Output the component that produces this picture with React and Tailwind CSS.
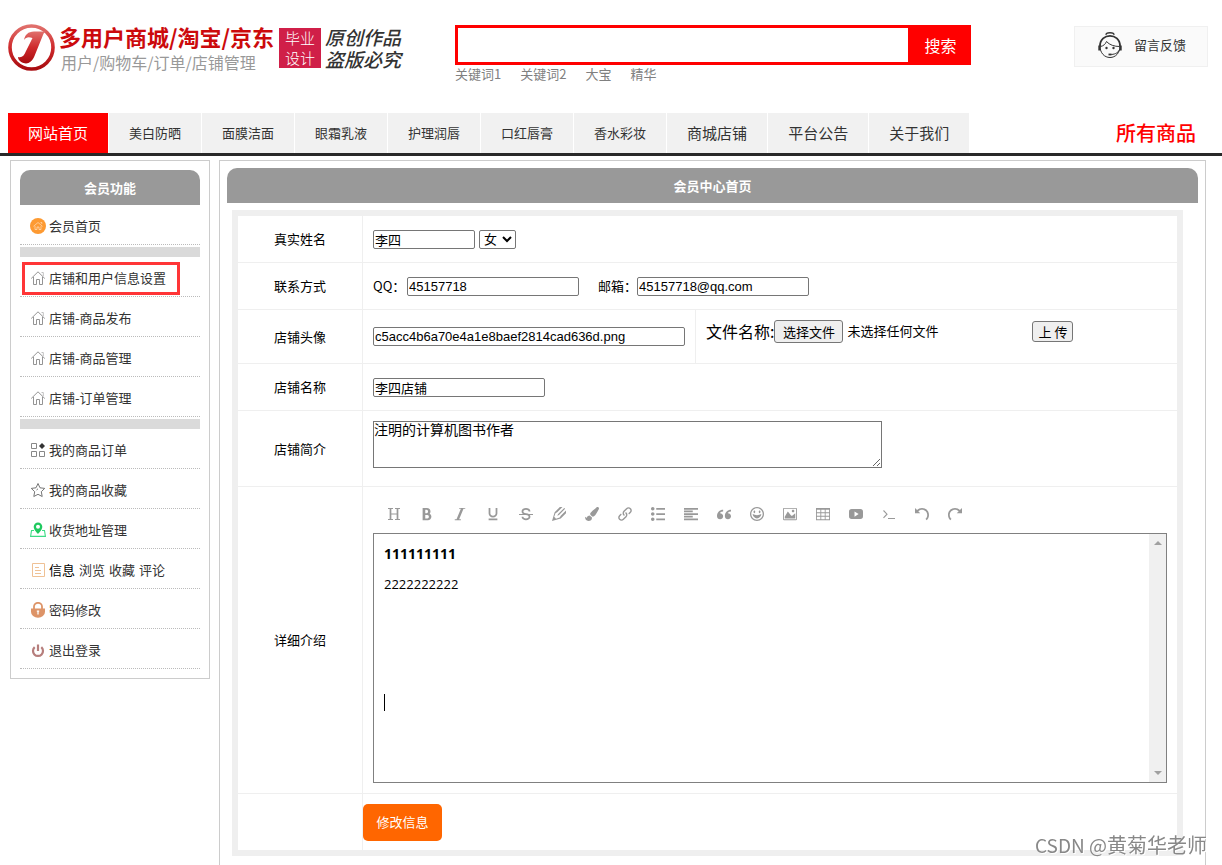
import React from "react";
import {
  ImBold,
  ImItalic,
  ImUnderline,
  ImStrikethrough,
  ImPencil2,
  ImLink,
  ImList2,
  ImParagraphLeft,
  ImQuotesLeft,
  ImHappy,
  ImImage,
  ImTable2,
  ImUndo,
  ImRedo,
} from "react-icons/im";
import { FaPaintBrush } from "react-icons/fa";

function LogoMark() {
  return (
    <svg width="48" height="48" viewBox="0 0 48 48" aria-hidden="true">
      <defs>
        <linearGradient id="ring" x1="0" y1="0" x2="0" y2="1">
          <stop offset="0" stopColor="#e0706c" />
          <stop offset="0.5" stopColor="#cf2a2c" />
          <stop offset="1" stopColor="#a80c10" />
        </linearGradient>
      </defs>
      <circle cx="23.5" cy="23.5" r="21.5" fill="#fff" stroke="url(#ring)" strokeWidth="3.6" />
      <path d="M16 16c1-5 4-8.500 10-8.500h12.500c-1.500 0-2.500 1-3.300 3L26.500 32c-2.500 6-6.500 8.500-11 7-4-1.300-5.500-4-5.500-6 4 1 6-1 8-6l6.500-13c-4-1.500-6.500-1-8.500 2z" fill="url(#ring)" />
    </svg>
  );
}

function AgentIcon() {
  return (
    <svg width="24" height="28" viewBox="0 0 24 28" fill="none" stroke="#333" strokeWidth="1" aria-hidden="true">
      <path d="M8 3.8C8 1 16 1 16 3.8" strokeWidth="1.6" />
      <path d="M2 15c0 7 4.500 11.500 10 11.500S22 22 22 15" />
      <path d="M2 15C2 1.500 22 1.500 22 15" strokeWidth="1.800" />
      <path d="M2.500 15.500c3-.5 5-2.500 6-5 3 3.500 8 5 13 5" />
      <path d="M1.500 14.500v5M22.500 14.500v5" strokeWidth="2.4" />
      <circle cx="8.500" cy="17" r="1.200" fill="#333" stroke="none" />
      <circle cx="15.500" cy="17" r="1.200" fill="#333" stroke="none" />
      <path d="M12 23.500c4 0 8-1 9.500-5" />
      <path d="M10.500 23.500h3" strokeWidth="1.800" />
    </svg>
  );
}

function HomeBadge() {
  return (
    <svg width="16" height="16" viewBox="0 0 16 16" fill="none" aria-hidden="true">
      <circle cx="8" cy="8" r="8" fill="#fd9a32" />
      <path d="M3.500 8.300L8 4.500l4.500 3.800M5 8v3.500h2V9h2v2.500h2V8M10.500 4.500h1.300v1.500" stroke="#fff" strokeOpacity="0.6" strokeWidth="0.800" />
    </svg>
  );
}

function HouseIcon() {
  return (
    <svg width="16" height="16" viewBox="0 0 16 16" fill="none" stroke="#888" strokeWidth="0.900" aria-hidden="true">
      <path d="M1.200 8.500L8 1.800l6.800 6.700M3.500 7v7.500h3V9.500h3v5h3V7" />
      <path d="M11.500 2.500h1.800v3.500" stroke="#bbb" />
    </svg>
  );
}

function OrdersIcon() {
  return (
    <svg width="16" height="16" viewBox="0 0 16 16" fill="none" stroke="#888" aria-hidden="true">
      <path d="M1.500 1.500h5v5h-5zM1.500 9.500h5v5h-5zM9.500 9.500h5v5h-5z" />
      <path d="M12 1l3 3-3 3-3-3z" fill="#333" stroke="none" />
    </svg>
  );
}

function StarIcon() {
  return (
    <svg width="16" height="16" viewBox="0 0 16 16" fill="none" stroke="#666" strokeWidth="0.900" aria-hidden="true">
      <path d="M8 1.500l2 4.300 4.700.6-3.400 3.300.9 4.800L8 12.300l-4.200 2.200.9-4.800L1.300 6.400 6 5.800z" strokeLinejoin="round" />
      <path d="M6.500 8l1.500-1.200" />
    </svg>
  );
}

function PinIcon() {
  return (
    <svg width="16" height="16" viewBox="0 0 16 16" fill="none" aria-hidden="true">
      <path d="M4 8.500H1.500L.6 14.400h14.800l-.9-5.900H12" stroke="#3ddc84" strokeWidth="1.100" />
      <path fillRule="evenodd" d="M8 .5a4.300 4.300 0 0 1 4.300 4.300C12.300 8 8 12 8 12S3.700 8 3.700 4.800A4.300 4.300 0 0 1 8 .5zM8 2.800a2 2 0 1 0 0 4 2 2 0 0 0 0-4z" fill="#1fc95f" />
    </svg>
  );
}

function NoteIcon() {
  return (
    <svg width="16" height="16" viewBox="0 0 16 16" fill="none" stroke="#efc195" aria-hidden="true">
      <path d="M2.500 1.500h12v13h-12z" />
      <path d="M5 5.500h4M5 8.500h6M5 11.500h6" />
    </svg>
  );
}

function LockIcon() {
  return (
    <svg width="16" height="16" viewBox="0 0 16 16" fill="none" aria-hidden="true">
      <path d="M4 7V4.500a4 3.700 0 0 1 8 0V7" stroke="#dd9468" strokeWidth="1.800" />
      <path d="M1 6.500h14v3.200a7 6 0 0 1-14 0z" fill="#dd9468" />
      <path d="M8 8.500v4M6.800 9.200h2.400" stroke="#fff" strokeWidth="1.300" />
    </svg>
  );
}

function PowerIcon() {
  return (
    <svg width="16" height="16" viewBox="0 0 16 16" fill="none" stroke="#b67e7c" strokeWidth="2.200" aria-hidden="true">
      <path d="M4.700 5.200a5 5 0 1 0 6.600 0M8 2.500v6.500" />
    </svg>
  );
}

function HeadingIcon() {
  return (
    <svg width="14" height="14" viewBox="0 0 14 14" fill="none" stroke="currentColor" aria-hidden="true">
      <path d="M3.500 1.500v11M10.500 1.500v11" strokeWidth="1.700" />
      <path d="M3.500 7h7M1 1.500h5M8 1.500h5M1 12.500h5M8 12.500h5" strokeWidth="1" />
    </svg>
  );
}

function VideoIcon() {
  return (
    <svg width="14" height="14" viewBox="0 0 16 16" fill="currentColor" aria-hidden="true">
      <path fillRule="evenodd" d="M3 2.300h10c2 0 3 1 3 3v5.400c0 2-1 3-3 3H3c-2 0-3-1-3-3V5.300c0-2 1-3 3-3zM6.300 5v6L11 8z" />
    </svg>
  );
}

function ConsoleIcon() {
  return (
    <svg width="14" height="14" viewBox="0 0 14 14" fill="none" stroke="currentColor" strokeWidth="1.100" aria-hidden="true">
      <path d="M1.500 3.500l3.500 3.700-3.500 3.700M6 11.500h7" />
    </svg>
  );
}

const NAV = [
  { text: "美白防晒" },
  { text: "面膜洁面" },
  { text: "眼霜乳液" },
  { text: "护理润唇" },
  { text: "口红唇膏" },
  { text: "香水彩妆" },
  { text: "商城店铺", large: true },
  { text: "平台公告", large: true },
  { text: "关于我们", large: true },
];

const TOOLS = [
  ["标题", HeadingIcon],
  ["加粗", ImBold],
  ["斜体", ImItalic],
  ["下划线", ImUnderline],
  ["删除线", ImStrikethrough],
  ["文字颜色", ImPencil2],
  ["背景色", FaPaintBrush],
  ["链接", ImLink],
  ["列表", ImList2],
  ["对齐", ImParagraphLeft],
  ["引用", ImQuotesLeft],
  ["表情", ImHappy],
  ["图片", ImImage],
  ["表格", ImTable2],
  ["视频", VideoIcon],
  ["代码", ConsoleIcon],
  ["撤销", ImUndo],
  ["重做", ImRedo],
];

function SideItem({ icon: Icon, text, marked }) {
  return (
    <li className="relative flex h-10 items-center gap-[3px] border-b border-dotted border-[#bbb] pl-[10px] pt-[2px]">
      <Icon />
      <a href="#" className="text-[#333]">{text}</a>
      {marked && <span className="absolute left-[2px] top-[5px] h-[33px] w-[158px] border-[3px] border-[#ff3537]" />}
    </li>
  );
}

function Divider() {
  return <li className="mt-[2px] h-[10px] bg-[#dadada]" aria-hidden="true" />;
}

const field =
  "h-[19px] rounded-[2px] border border-[#767676] bg-white px-px font-['Liberation_Sans','Noto_Sans_CJK_SC',sans-serif] text-[13px] leading-[17px] text-black outline-none";
const head = "border-b border-r border-[#efefef] font-normal";
const cell = "border-b border-[#efefef] px-[10px]";

function Header() {
  return (
    <header className="flex h-[113px] items-start pl-2">
      <a href="#" className="flex w-[447px] shrink-0 items-start pt-6">
        <LogoMark />
        <span className="ml-[3px] block">
          <span className="block text-[22px] font-bold leading-6 text-[#cc0a0c]">多用户商城/淘宝/京东</span>
          <span className="block pl-[2px] text-base leading-7 text-[#999]">用户/购物车/订单/店铺管理</span>
        </span>
        <span className="ml-[5px] mt-1 block w-[42px] bg-[#d01f48] text-center text-[15px] font-light leading-5 text-white">
          毕业
          <br />
          设计
        </span>
        <span className="ml-1 mt-[2px] block whitespace-nowrap text-[19px] font-medium italic leading-[22px] text-[#333]">
          <span className="block">原创作品</span>
          <span className="block">盗版必究</span>
        </span>
      </a>
      <div className="w-[516px] pt-[25px]">
        <form className="flex h-10" onSubmit={(e) => e.preventDefault()}>
          <input aria-label="搜索关键词" className="min-w-0 flex-1 border-[3px] border-r-0 border-[#f00] px-2 outline-none" />
          <button className="w-[63px] bg-[#f00] pl-[2px] text-base text-white">搜索</button>
        </form>
        <div className="flex gap-[19px] text-[13px] leading-[18px] text-[#808080]">
          <a href="#">关键词1</a>
          <a href="#">关键词2</a>
          <a href="#">大宝</a>
          <a href="#">精华</a>
        </div>
      </div>
      <a href="#" className="ml-auto mr-[14px] mt-[26px] flex h-[41px] w-[134px] items-center gap-3 border border-[#f0f0f0] bg-[#fafafa] pb-1 pl-[23px] text-[13px] text-[#333]">
        <AgentIcon />
        留言反馈
      </a>
    </header>
  );
}

export default function App() {
  return (
    <div className="flex min-h-screen flex-col bg-white font-['Noto_Sans_CJK_SC',sans-serif] text-[13px] leading-5 text-black">
      <Header />
      <nav className="flex h-[43px] items-stretch gap-px border-b-[3px] border-[#292929] pl-2 leading-10">
        <a href="#" className="bg-[#f00] px-5 text-[15px] text-white">网站首页</a>
        {NAV.map((n) => (
          <a key={n.text} href="#" className={n.large ? "bg-[#f1f1f1] px-5 text-[15px] text-[#333]" : "bg-[#f1f1f1] px-5 text-[#333]"}>
            {n.text}
          </a>
        ))}
        <a href="#" className="ml-auto mr-[26px] text-xl font-medium leading-10 text-[#f00]">所有商品</a>
      </nav>

      <div className="flex flex-1 gap-[9px] pl-[10px] pr-4 pt-1">
        <aside className="w-[200px] shrink-0 self-start border border-[#ccc] p-[9px]">
          <h2 className="rounded-t-[10px] bg-[#999] text-center text-[13px] font-bold leading-[35px] text-white">会员功能</h2>
          <ul>
            <SideItem icon={HomeBadge} text="会员首页" />
            <Divider />
            <SideItem icon={HouseIcon} text="店铺和用户信息设置" marked />
            <SideItem icon={HouseIcon} text="店铺-商品发布" />
            <SideItem icon={HouseIcon} text="店铺-商品管理" />
            <SideItem icon={HouseIcon} text="店铺-订单管理" />
            <Divider />
            <SideItem icon={OrdersIcon} text="我的商品订单" />
            <SideItem icon={StarIcon} text="我的商品收藏" />
            <SideItem icon={PinIcon} text="收货地址管理" />
            <li className="flex h-10 items-center gap-[3px] border-b border-dotted border-[#bbb] pl-[10px] pt-[2px] text-[#333]">
              <NoteIcon />
              <span className="flex gap-1">
                <span className="text-black">信息</span>
                <a href="#">浏览</a>
                <a href="#">收藏</a>
                <a href="#">评论</a>
              </span>
            </li>
            <SideItem icon={LockIcon} text="密码修改" />
            <SideItem icon={PowerIcon} text="退出登录" />
          </ul>
        </aside>

        <main className="min-w-0 flex-1 border border-b-0 border-[#ccc] p-[7px]">
          <h1 className="rounded-t-[10px] bg-[#999] text-center text-[13px] font-bold leading-[35px] text-white">会员中心首页</h1>
          <form className="ml-[5px] mr-[15px] mt-[7px] border-[6px] border-[#efefef]" onSubmit={(e) => e.preventDefault()}>
            <table className="w-full table-fixed border-separate border-spacing-0">
              <colgroup>
                <col className="w-[125px]" />
                <col className="w-[333px]" />
                <col />
              </colgroup>
              <tbody>
                <tr className="h-[47px]">
                  <th className={head}><label htmlFor="name">真实姓名</label></th>
                  <td className={cell} colSpan={2}>
                    <div className="flex items-center gap-1">
                      <input id="name" className={field + " w-[102px]"} defaultValue="李四" />
                      <select aria-label="性别" className="h-[19px] w-[37px] rounded-[2px] border border-[#767676] bg-white font-['Liberation_Sans','Noto_Sans_CJK_SC',sans-serif] text-[13px] leading-[13px]">
                        <option>女</option>
                        <option>男</option>
                      </select>
                    </div>
                  </td>
                </tr>
                <tr className="h-[47px]">
                  <th className={head}>联系方式</th>
                  <td className={cell} colSpan={2}>
                    <div className="flex items-center">
                      <label htmlFor="qq" className="w-[34px] whitespace-nowrap">QQ：</label>
                      <input id="qq" className={field + " w-[172px]"} defaultValue="45157718" />
                      <label htmlFor="mail" className="ml-[19px]">邮箱：</label>
                      <input id="mail" className={field + " w-[172px]"} defaultValue="45157718@qq.com" />
                    </div>
                  </td>
                </tr>
                <tr className="h-[54px]">
                  <th className={head}><label htmlFor="avatar">店铺头像</label></th>
                  <td className={cell + " border-r"}>
                    <input id="avatar" className={field + " block w-full"} defaultValue="c5acc4b6a70e4a1e8baef2814cad636d.png" />
                  </td>
                  <td className={cell + " pt-[9px] align-top"}>
                    <div className="flex items-center">
                      <span className="text-base leading-6">文件名称:</span>
                      <label htmlFor="file" className="h-[23px] w-[69px] rounded-[3px] border border-[#767676] bg-[#efefef] text-center leading-[21px]">
                        选择文件
                      </label>
                      <input id="file" type="file" className="sr-only" />
                      <span className="ml-1 w-[185px]">未选择任何文件</span>
                      <button type="button" className="h-[21px] w-[41px] rounded-[3px] border border-[#767676] bg-[#efefef] leading-[19px]">
                        上 传
                      </button>
                    </div>
                  </td>
                </tr>
                <tr className="h-[47px]">
                  <th className={head}><label htmlFor="shop">店铺名称</label></th>
                  <td className={cell} colSpan={2}>
                    <input id="shop" className={field + " block w-[172px]"} defaultValue="李四店铺" />
                  </td>
                </tr>
                <tr className="h-[76px]">
                  <th className={head}><label htmlFor="intro">店铺简介</label></th>
                  <td className={cell + " pt-[10px] align-top"} colSpan={2}>
                    <textarea
                      id="intro"
                      className="block h-[47px] w-[509px] border border-[#767676] text-[14px] leading-[14px] outline-none"
                      defaultValue="注明的计算机图书作者"
                    />
                  </td>
                </tr>
                <tr>
                  <th className={head}>详细介绍</th>
                  <td className={cell + " py-[10px]"} colSpan={2}>
                    <div className="flex h-9 items-start px-1 pt-px text-[#999]">
                      {TOOLS.map(([label, Icon]) => (
                        <button key={label} type="button" aria-label={label} className="flex h-8 w-[33px] items-center justify-center text-[14px]">
                          <Icon />
                        </button>
                      ))}
                    </div>
                    <div className="flex h-[250px] border border-[#808080]">
                      <div
                        role="textbox"
                        aria-label="详细介绍"
                        contentEditable
                        suppressContentEditableWarning
                        className="flex-1 overflow-hidden px-[10px] pt-[5px] font-['Open_Sans','Noto_Sans_CJK_SC',sans-serif] leading-[30px] outline-none"
                      >
                        <p className="text-[14px] font-bold">111111111</p>
                        <p>2222222222</p>
                        <p><br /></p>
                        <p><br /></p>
                        <p><br /></p>
                        <p className="flex h-[26px] items-center"><span className="h-[17px] w-px bg-black" /></p>
                      </div>
                      <div className="flex w-[17px] flex-col items-center justify-between bg-[#f0f0f0] py-[7px] text-[#a0a0a0]" aria-hidden="true">
                        <svg width="8" height="4" viewBox="0 0 8 4"><path d="M0 4l4-4 4 4z" fill="currentColor" /></svg>
                        <svg width="8" height="4" viewBox="0 0 8 4"><path d="M0 0l4 4 4-4z" fill="currentColor" /></svg>
                      </div>
                    </div>
                  </td>
                </tr>
                <tr className="h-[56px]">
                  <th className="border-r border-[#efefef]" />
                  <td colSpan={2}>
                    <button className="block h-[37px] w-[79px] rounded-[5px] bg-[#f60] text-white">修改信息</button>
                  </td>
                </tr>
              </tbody>
            </table>
          </form>
        </main>
      </div>

      <div className="pointer-events-none fixed bottom-1 right-[15px] flex items-center text-xl leading-8 text-[#888] [text-shadow:1px_1px_0_#fff]">
        <span className="text-[19px] leading-8">CSDN @</span>黄菊华老师
      </div>
    </div>
  );
}
